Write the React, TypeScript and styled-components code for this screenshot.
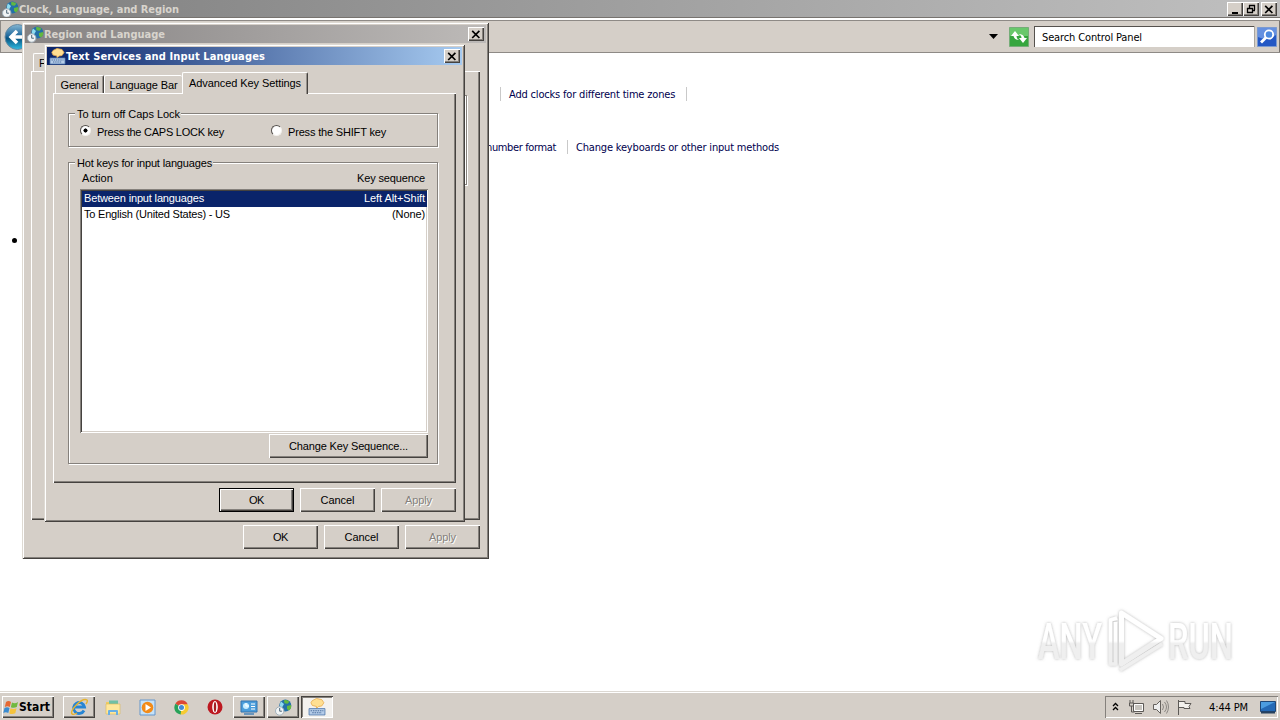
import React, { useLayoutEffect, useRef, useState } from 'react';
import styled, { createGlobalStyle, css } from 'styled-components';

const face = '#d5cfc8';
const Global = createGlobalStyle`
  *{box-sizing:border-box}
  body{margin:0;overflow:hidden;background:#fff}
`;
const sans = css`font-family:"Liberation Sans",Arial,sans-serif;font-size:11px;`;
const ui = css`font-family:"DejaVu Sans Condensed","DejaVu Sans",sans-serif;font-size:11px;`;
const raised = css`box-shadow:inset 1px 1px #fff,inset -1px -1px #45423f,inset -2px -2px #85817c;`;

const FitText = styled.span<{ $w: number }>`display:block;width:${p => p.$w}px;white-space:nowrap;flex:none;`;
/* Spreads its letters so the label takes the given width. */
function Fit({ w, children }: { w: number; children: string }) {
  const ref = useRef<HTMLSpanElement>(null);
  const [gap, setGap] = useState(0);
  useLayoutEffect(() => {
    const natural = ref.current!.getBoundingClientRect().width;
    setGap((w - natural) / children.length);
  }, [w, children]);
  return <FitText $w={w}><span ref={ref} style={{ letterSpacing: gap }}>{children}</span></FitText>;
}

const Screen = styled.div`position:relative;width:1280px;height:720px;display:flex;flex-direction:column;overflow:hidden;background:#fff;color:#000;${ui}`;
const MainTitle = styled.header`height:18px;flex:none;display:flex;align-items:center;padding:0 3px 0 2px;background:linear-gradient(90deg,#808080,#c0c0c0);color:#d8d4cd;font-weight:bold;`;
const Grow = styled.div`flex:1;`;
const TitleLabel = styled.div<{ $drop?: boolean }>`line-height:16px;padding-top:${p => (p.$drop ? 1 : 0)}px;`;
const TitleBtn = styled.button<{ $ml?: number }>`width:16px;height:14px;padding:0;border:0;margin-left:${p => p.$ml || 0}px;background:${face};display:flex;align-items:center;justify-content:center;${raised}`;
const Toolbar = styled.div`height:35px;flex:none;background:${face};border-top:2px solid #fff;border-bottom:1px solid #8e8a86;box-shadow:0 -1px #77736f,inset 1px 1px #8e8a86,inset -1px 0 #77736f;display:flex;align-items:center;padding:1px 3px 0 3px;`;
const Arrow = styled.svg`margin-right:11px;`;
const SearchBox = styled.div`width:221px;height:21px;margin:0 2px 0 5px;padding:1px 0 0 8px;display:flex;align-items:center;background:#fff;box-shadow:inset 1px 1px #55514d;border:0;border-right:1px solid #aaa59e;`;
const Content = styled.main`flex:1;padding:32px 0 0 500px;color:#00004e;`;
const Links = styled.div`display:flex;align-items:center;height:18px;margin-bottom:35px;`;
const Sep = styled.i<{ $l?: number; $r?: number }>`width:1px;height:14px;background:#c9c9c9;margin:0 ${p => p.$r || 0}px 0 ${p => p.$l || 0}px;`;
const FormatLinks = styled(Links)`margin-left:-14px;`;
const Bullet = styled.div`width:5px;height:5px;border-radius:50%;background:#000;margin:82px 0 0 -488px;`;

const Dialog = styled.section<{ $x: number; $y: number; $w: number; $h: number }>`
  position:absolute;left:${p => p.$x}px;top:${p => p.$y}px;width:${p => p.$w}px;height:${p => p.$h}px;isolation:isolate;
  background:${face};padding:3px;display:flex;flex-direction:column;
  box-shadow:inset 1px 1px #dedad3,inset -1px -1px #45423f,inset 2px 2px #fff,inset -2px -2px #85817c;`;
const DialogTitle = styled.header<{ $active?: boolean }>`height:18px;flex:none;display:flex;align-items:center;padding:0 2px;font-weight:bold;
  color:${p => (p.$active ? '#fff' : '#d8d4cd')};background:${p => (p.$active ? 'linear-gradient(90deg,#0a246a,#a6caf0)' : 'linear-gradient(90deg,#858282,#bdbab8)')};`;
const Tabs = styled.div<{ $mt: number; $ml: number }>`display:flex;align-items:flex-end;height:21px;flex:none;margin:${p => p.$mt}px 0 0 ${p => p.$ml}px;${sans}position:relative;z-index:1;`;
const Tab = styled.div<{ $w: number; $on?: boolean; $open?: boolean; $start?: boolean }>`width:${p => p.$w}px;height:${p => (p.$on ? 22 : 18)}px;margin-bottom:${p => (p.$on ? -1 : 0)}px;
  display:flex;justify-content:${p => (p.$start ? 'flex-start' : 'center')};padding:${p => (p.$on ? 4 : 3)}px 0 0 ${p => (p.$start ? 5 : 0)}px;background:${face};line-height:13px;
  border-top:1px solid #fff;border-left:1px solid #fff;border-right:${p => (p.$open ? 0 : 1)}px solid #45423f;border-radius:2px 2px 0 0;
  box-shadow:${p => (p.$open ? 'none' : 'inset -1px 0 #96918b')};`;
const Panel = styled.div<{ $ml: number; $w: number; $h: number }>`margin-left:${p => p.$ml}px;width:${p => p.$w}px;height:${p => p.$h}px;flex:none;padding:20px 18px 0 15px;${sans}${raised}`;
const BackPanel = styled(Panel)`padding:24px 13px 0 0;`;
const BackGroup = styled.div`height:90px;margin-left:15px;border:1px solid #85817c;box-shadow:inset -1px 1px #fff,1px 1px #fff;`;
const Group = styled.div<{ $h: number }>`position:relative;height:${p => p.$h}px;border:1px solid #85817c;box-shadow:inset 1px 1px #fff,1px 1px #fff;margin-bottom:15px;padding:10px 9px 0 11px;`;
const Legend = styled.div`position:absolute;left:6px;top:-7px;background:${face};padding:0 1px 0 2px;line-height:14px;`;
const Radios = styled.div`display:flex;align-items:center;height:15px;`;
const Radio = styled.i<{ $ml?: number; $on?: boolean }>`width:11px;height:11px;flex:none;margin:0 6px 2px ${p => p.$ml || 0}px;border-radius:50%;border:1px solid;border-color:#55514d #f3f1ed #f3f1ed #55514d;
  background:${p => (p.$on ? 'radial-gradient(circle,#000 0 1.8px,#fff 2.3px)' : '#fff')};`;
const Columns = styled.div`display:flex;justify-content:space-between;height:12px;line-height:12px;padding:0 3px 0 2px;margin:-1px 0 5px;`;
const List = styled.div`height:244px;background:#fff;padding:2px 1px;box-shadow:inset 1px 1px #85817c,inset -1px -1px #fff,inset 2px 2px #45423f,inset -2px -2px ${face};`;
const Row = styled.div<{ $on?: boolean }>`height:16px;padding:0 2px 0 3px;line-height:15px;display:flex;justify-content:space-between;color:${p => (p.$on ? '#fff' : '#000')};background:${p => (p.$on ? '#0a246a' : 'transparent')};${p => p.$on && 'margin-left:1px;padding-left:2px;'}`;
const Button = styled.button<{ $w: number; $def?: boolean; $off?: boolean }>`width:${p => p.$w}px;height:24px;padding:0 0 1px;border:${p => (p.$def ? '1px solid #000' : '0')};background:${face};display:flex;align-items:center;justify-content:center;${sans}
  color:${p => (p.$off ? '#85817c' : '#000')};text-shadow:${p => (p.$off ? '1px 1px #fff' : 'none')};${raised}`;
const ChangeRow = styled.div`display:flex;justify-content:flex-end;margin-top:1px;`;
const Actions = styled.div<{ $mt: number }>`display:flex;justify-content:flex-end;gap:6px;margin:${p => p.$mt}px 6px 0 0;`;

const Taskbar = styled.footer`height:28px;flex:none;background:${face};border-top:1px solid #fff;box-shadow:0 -1px #dcd8d2;display:flex;align-items:center;padding:1px 2px 0;`;
const StartBtn = styled.button`width:52px;height:22px;border:0;padding:0 0 0 1px;background:${face};display:flex;align-items:center;gap:0;${ui}font-size:12px;font-weight:bold;${raised}`;
const Task = styled.div<{ $k?: 'up' | 'down'; $w?: number; $ml?: number }>`width:${p => p.$w || 32}px;height:22px;margin-left:${p => p.$ml || 0}px;display:flex;align-items:center;justify-content:center;
  ${p => p.$k === 'up' && raised}${p => p.$k === 'down' && css`background:#f3f1ee;box-shadow:inset 1px 1px #45423f,inset -1px -1px #fff,inset 2px 2px #85817c;`}`;
const Tray = styled.div`width:173px;height:22px;display:flex;align-items:center;padding-left:7px;box-shadow:inset 1px 1px #85817c,inset -1px -1px #fff;svg{flex:none}`;
const TrayGap = styled.i<{ $w: number }>`width:${p => p.$w}px;flex:none;`;
const Watermark = styled.div`position:absolute;left:1027px;top:604px;`;
const BackCorner = styled.div`width:22px;height:31px;overflow:hidden;align-self:center;`;

const GlobeIcon = ({ s = 17 }: { s?: number }) => (
  <svg width={s} height={s} viewBox="0 0 17 17">
    <circle cx="10.3" cy="6.5" r="6" fill="#2470a8" /><path d="M9 1.2q3-1 5.500 1.500l-2 2-3-.5zM12 7l4-1q1 3-2 5.500l-2-1.500z" fill="#62b83f" /><path d="M6 2.500q-2.500 4 .5 7L9 5z" fill="#8fdcf0" />
    <circle cx="4.7" cy="12" r="4.2" fill="#f1f4f5" stroke="#a3b1bc" /><path d="M4.7 9v3.2h2.2" stroke="#4d6577" fill="none" />
  </svg>
);
const KeyboardIcon = ({ s = 17 }: { s?: number }) => (
  <svg width={s} height={s} viewBox="0 0 17 17">
    <path d="M4 2.5 8 .5l5 1 2 3-2 3-3 .5-2 2v-2L4 7 2.8 4.5z" fill="#ffdf92" stroke="#e8ad50" strokeWidth=".8" />
    <path d="M1 10h15v6H1z" fill="#b5cce8" stroke="#5279ad" strokeWidth=".8" /><path d="M2.5 12h12M4 14h9" stroke="#4d6f9e" strokeWidth="1" strokeDasharray="1.4 .8" />
  </svg>
);
const Cross = () => <svg width="10" height="9" viewBox="0 0 10 9"><path d="m1.2.8 7.2 7.2M8.4.8 1.2 8" stroke="#000" strokeWidth="1.7" /></svg>;
const CloseBtn = ({ ml }: { ml?: number }) => <TitleBtn $ml={ml} aria-label="Close"><Cross /></TitleBtn>;
const IE = () => <svg width="18" height="18" viewBox="0 0 18 18"><path d="M14 12.5A5.5 5.5 0 1 1 14.5 9H5" fill="none" stroke="#2685d4" strokeWidth="2.8" /><path d="M2 16C-1 13 12-1 17 2q1 1-1 4M2 16q2 1 5-1" fill="none" stroke="#e6b32e" strokeWidth="1.4" /></svg>;
const Folder = () => <svg width="17" height="17" viewBox="0 0 17 17"><path d="M1 3h5l1.5 2H15v10H1z" fill="#f0cc62" /><path d="M4 1.5h9v5H4z" fill="#71c0a5" /><path d="M1 5h14v10H1z" fill="#ffe79b" stroke="#dcb957" strokeWidth=".6" /><path d="M3 16v-4q0-1 1-1h8q1 0 1 1v4h-2v-3H5v3z" fill="#69afe3" /></svg>;
const Player = () => <svg width="17" height="17" viewBox="0 0 17 17"><path d="M1 1h15v15H1z" fill="#c6e2f8" stroke="#6596cc" /><circle cx="8.5" cy="8.5" r="5.8" fill="#f28b19" /><path d="m6.5 5 5.5 3.5L6.5 12z" fill="#fff" /></svg>;
const Chrome = () => <svg width="15" height="15" viewBox="0 0 16 16"><path d="M8 8 1.5 4A7.5 7.5 0 0 1 14.6 4.4z" fill="#dc4836" /><path d="M8 8 1.5 4A7.5 7.5 0 0 0 7.2 15.5L11 9z" fill="#27a259" /><path d="m8 8-1 7.5A7.5 7.5 0 0 0 14.6 4.4H8z" fill="#f6cb31" /><circle cx="8" cy="8" r="3.6" fill="#fff" /><circle cx="8" cy="8" r="2.7" fill="#458bd4" /></svg>;
const Opera = () => <svg width="16" height="16" viewBox="0 0 16 16"><circle cx="8" cy="8" r="7.5" fill="#bd1820" /><ellipse cx="8" cy="8" rx="2.8" ry="6" fill="#fff" /><ellipse cx="8" cy="8" rx="1.2" ry="5" fill="#a61d21" /></svg>;
const Panels = () => <svg width="18" height="17" viewBox="0 0 18 17"><path d="M1 2h16v11H1z" fill="#4b9ddb" stroke="#3472ad" /><circle cx="6" cy="7" r="3" fill="#c9edff" /><path d="M6 4v3h3M11 5h4M11 7.5h4M11 10h4" stroke="#fff" fill="none" /><path d="M4 15h10" stroke="#6a95bb" strokeWidth="2" /></svg>;
const Flag = () => <svg width="16" height="17" viewBox="0 0 16 16"><path d="M3 2.500q2.500-2 5 0L6.800 7.500Q4.500 6 1.800 7.500z" fill="#e56833" /><path d="M9 3q3 1.500 6-.6L13.800 7.500q-3 1.500-6 .2z" fill="#70b940" /><path d="M1.500 8.500q2.500-1.500 5 0L5.300 13.500q-2.500-1.500-5 0z" fill="#3a8bd0" /><path d="M7.500 8.800q3 1.500 6 0L12.300 13.700q-3 1.500-6 .2z" fill="#f5c33d" /></svg>;

export default function App() {
  return (
    <Screen>
      <Global />
      <MainTitle>
        <GlobeIcon /><TitleLabel $drop><Fit w={160}>Clock, Language, and Region</Fit></TitleLabel><Grow />
        <TitleBtn aria-label="Minimize"><svg width="10" height="9"><path d="M2 8h6" stroke="#000" strokeWidth="2" /></svg></TitleBtn>
        <TitleBtn aria-label="Restore"><svg width="10" height="10"><path d="M3 1.5h6M3.5 1v3M8.5 1v5M7 6.5h2M1 4.5h6M1.5 4v5M6.5 4v5M1 8.5h6" stroke="#000" strokeWidth="1.3" fill="none" /></svg></TitleBtn>
        <CloseBtn ml={2} />
      </MainTitle>
      <Toolbar>
        <BackCorner><svg width="31" height="31" viewBox="0 0 31 31"><defs><linearGradient id="back" x2="0" y2="1"><stop stopColor="#86b7d3" /><stop offset=".45" stopColor="#216a9e" /><stop offset=".55" stopColor="#075381" /><stop offset="1" stopColor="#31bde3" /></linearGradient></defs><circle cx="14.500" cy="16" r="12.500" fill="url(#back)" stroke="#6688a0" /><path d="M23 16H8m6-6-6 6 6 6" fill="none" stroke="#fff" strokeWidth="3.5" /></svg></BackCorner>
        <Grow />
        <Arrow width="9" height="5"><path d="M0 0h9L4.5 5z" /></Arrow>
        <svg width="20" height="20" viewBox="0 0 20 20"><path d="M.5.5h19v19H.5z" fill="#37a63f" stroke="#75ad78" /><path d="M1 1h18v8H1z" fill="#69c86b" /><path d="M2 9l4-5 4 5H7.5q0 3 3 4-5 0-6-4zM18 11l-4 5-4-5h2.5q0-3-3-4 5 0 6 4z" fill="#fff" /></svg>
        <SearchBox><Fit w={100}>Search Control Panel</Fit></SearchBox>
        <svg width="20" height="20" viewBox="0 0 20 20"><path d="M.5.5h19v19H.5z" fill="#2458c4" stroke="#7b9ad0" /><path d="M1 1h18v7q-9 6-18 2z" fill="#6590e0" /><circle cx="12" cy="7.5" r="4.2" fill="#4d89df" stroke="#fff" strokeWidth="1.8" /><path d="m9 10.5-5 5" stroke="#fff" strokeWidth="2.8" /></svg>
      </Toolbar>
      <Content>
        <Links><Sep $r={8} /><Fit w={166}>Add clocks for different time zones</Fit><Sep $l={11} /></Links>
        <FormatLinks><Fit w={70}>number format</Fit><Sep $l={11} $r={8} /><Fit w={203}>Change keyboards or other input methods</Fit></FormatLinks>
        <Bullet />
      </Content>
      <Taskbar>
        <StartBtn><Flag /><Fit w={31}>Start</Fit></StartBtn>
        <Task $k="up" $ml={9}><IE /></Task>
        <Task $ml={2}><Folder /></Task><Task $ml={2}><Player /></Task><Task $ml={2}><Chrome /></Task><Task $ml={2}><Opera /></Task>
        <Task $k="up" $ml={2}><Panels /></Task><Task $k="up" $ml={2}><GlobeIcon /></Task><Task $k="down" $ml={2}><KeyboardIcon s={18} /></Task>
        <Grow />
        <Tray>
          <svg width="7" height="10"><path d="m1 4 2.5-2.5L6 4M1 8l2.5-2.5L6 8" fill="none" stroke="#000" strokeWidth="1.3" /></svg><TrayGap $w={9} />
          <svg width="17" height="16"><path d="M5.500 4.500h10v8h-10z" fill="#c7c4be" stroke="#5d5a57" /><path d="M6.500 5.500h8v6h-8z" fill="none" stroke="#fff" /><path d="M7 14.500h7M2 1v3M5 1v3M1.500 4v3h4V4zM3.500 7v6h3" fill="none" stroke="#5d5a57" /></svg><TrayGap $w={7} />
          <svg width="17" height="16"><path d="M1.500 5.500h3l4-4v13l-4-4h-3z" fill="#eee" stroke="#65615d" /><path d="M10.500 5q2 3 0 6M12.500 3q4 5 0 10M14.500 1.500q4 6.500 0 13" fill="none" stroke="#8b8783" /></svg><TrayGap $w={7} />
          <svg width="17" height="16"><path d="M2.500 1v15M3 2.500h6v2h6l-2 3 1 2H8v-1H3" fill="#f2f0ec" stroke="#5d5a57" /></svg><TrayGap $w={16} />
          <Fit w={39}>4:44 PM</Fit><TrayGap $w={12} />
          <svg width="16" height="15"><path d="M.5 1.500h15v10H.5z" fill="#2469b5" stroke="#1e4777" /><path d="M1 2h14L1 9z" fill="#4b9ce0" /><path d="M1 11.500h14v2H1z" fill="#27415e" /></svg>
        </Tray>
      </Taskbar>
      <Watermark>
        <svg width="230" height="80" viewBox="-10 -4 230 80">
          <defs><filter id="shade" x="-10%" y="-20%" width="120%" height="140%"><feDropShadow dx="0" dy="0" stdDeviation="1.6" floodColor="#777" floodOpacity=".55" /></filter><linearGradient id="pale" gradientUnits="userSpaceOnUse" x1="0" y1="0" x2="0" y2="66"><stop offset=".5" stopColor="#fff" /><stop offset=".54" stopColor="#efefef" /></linearGradient></defs>
          <g filter="url(#shade)" fill="url(#pale)" fontFamily="Roboto, sans-serif" fontSize="50" fontWeight="500">
            <text x="1" y="51" textLength="64" lengthAdjust="spacingAndGlyphs">ANY</text><text x="131" y="51" textLength="65" lengthAdjust="spacingAndGlyphs">RUN</text>
            <path d="M80 10 73.500 12v44l5 0V14M83 62l42-26" fill="none" stroke="url(#pale)" strokeWidth="3.500" strokeLinejoin="round" />
            <path d="M84.500 5 124 30.500 84.500 56z" fill="none" stroke="url(#pale)" strokeWidth="5" strokeLinejoin="round" />
          </g>
        </svg>
      </Watermark>
      <Dialog $x={22} $y={22} $w={467} $h={537}>
        <DialogTitle><GlobeIcon /><TitleLabel $drop><Fit w={121}>Region and Language</Fit></TitleLabel><Grow /><CloseBtn /></DialogTitle>
        <Tabs $mt={7} $ml={8}><Tab $w={60} $start><Fit w={6}>F</Fit></Tab></Tabs>
        <BackPanel $ml={6} $w={449} $h={449}><BackGroup /></BackPanel>
        <Actions $mt={5}><Button $w={75}><Fit w={15}>OK</Fit></Button><Button $w={75}><Fit w={34}>Cancel</Fit></Button><Button $w={75} $off><Fit w={27}>Apply</Fit></Button></Actions>
      </Dialog>
      <Dialog $x={44} $y={44} $w={421} $h={478}>
        <DialogTitle $active><KeyboardIcon /><TitleLabel $drop><Fit w={199}>Text Services and Input Languages</Fit></TitleLabel><Grow /><CloseBtn /></DialogTitle>
        <Tabs $mt={7} $ml={8}>
          <Tab $w={49}><Fit w={38}>General</Fit></Tab><Tab $w={78} $open><Fit w={68}>Language Bar</Fit></Tab><Tab $w={126} $on><Fit w={112}>Advanced Key Settings</Fit></Tab>
        </Tabs>
        <Panel $ml={6} $w={403} $h={390}>
          <Group $h={34}>
            <Legend><Fit w={103}>To turn off Caps Lock</Fit></Legend>
            <Radios><Radio $on /><Fit w={127}>Press the CAPS LOCK key</Fit><Radio $ml={47} /><Fit w={98}>Press the SHIFT key</Fit></Radios>
          </Group>
          <Group $h={302}>
            <Legend><Fit w={135}>Hot keys for input languages</Fit></Legend>
            <Columns><Fit w={31}>Action</Fit><Fit w={68}>Key sequence</Fit></Columns>
            <List>
              <Row $on><Fit w={120}>Between input languages</Fit><Fit w={61}>Left Alt+Shift</Fit></Row>
              <Row><Fit w={146}>To English (United States) - US</Fit><Fit w={33}>(None)</Fit></Row>
            </List>
            <ChangeRow><Button $w={159}><Fit w={119}>Change Key Sequence...</Fit></Button></ChangeRow>
          </Group>
        </Panel>
        <Actions $mt={5}><Button $w={75} $def><Fit w={15}>OK</Fit></Button><Button $w={75}><Fit w={34}>Cancel</Fit></Button><Button $w={75} $off><Fit w={27}>Apply</Fit></Button></Actions>
      </Dialog>
    </Screen>
  );
}
